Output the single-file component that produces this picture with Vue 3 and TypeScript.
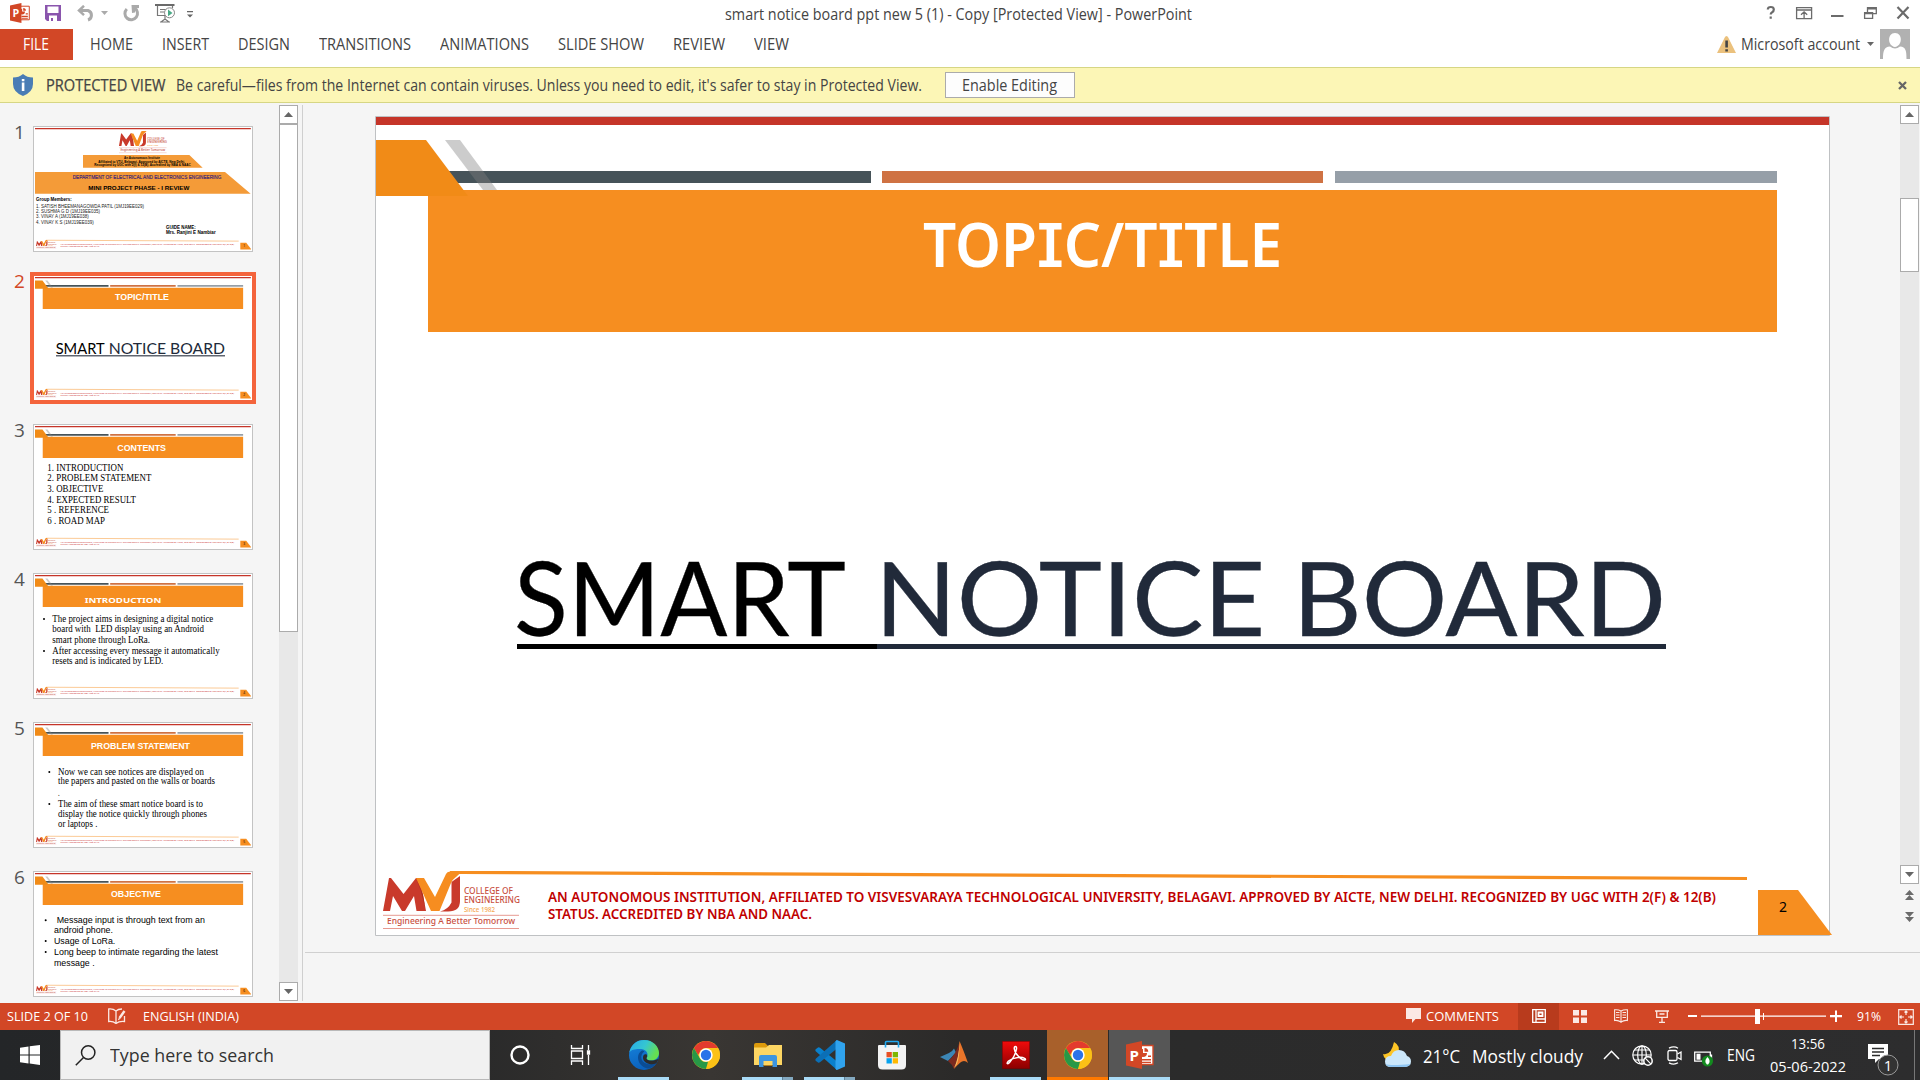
<script setup lang="ts">
interface Line { x: number; y: number; w: number; t: string; bullet?: number }
interface Thumb { id: number; title?: Line; serifTitle?: boolean; sans?: boolean; size: number; lines: Line[] }

// Stretches a single-line label to a fixed width.
const vFit = {
  mounted(el: HTMLElement, binding: { value: number }) {
    const natural = el.getBoundingClientRect().width
    el.style.transform = `scaleX(${binding.value / natural})`
    el.style.marginRight = `${binding.value - natural}px`
  },
}

const tabs = [
  { t: 'HOME', w: 43 }, { t: 'INSERT', w: 47 }, { t: 'DESIGN', w: 52 }, { t: 'TRANSITIONS', w: 92 },
  { t: 'ANIMATIONS', w: 89 }, { t: 'SLIDE SHOW', w: 86 }, { t: 'REVIEW', w: 52 }, { t: 'VIEW', w: 35 },
]

// Splits a heading around its capital I, which is drawn with slab serifs.
const runs = (t: string): string[] => t.split(/(I)/).filter(Boolean)

const footer: Line[] = [
  { x: 172, y: 785, w: 1168, t: 'AN AUTONOMOUS INSTITUTION, AFFILIATED TO VISVESVARAYA TECHNOLOGICAL UNIVERSITY, BELAGAVI. APPROVED BY AICTE, NEW DELHI. RECOGNIZED BY UGC WITH 2(F) & 12(B)' },
  { x: 172, y: 802, w: 264, t: 'STATUS. ACCREDITED BY NBA AND NAAC.' },
]

const thumbs: Thumb[] = [
  { id: 1, size: 14, lines: [] },
  { id: 2, size: 44, title: { x: 240, y: 68, w: 162, t: 'TOPIC/TITLE' }, lines: [] },
  {
    id: 3, size: 28, title: { x: 247, y: 75, w: 146, t: 'CONTENTS' }, lines: [
      { x: 37, y: 134, w: 228, t: '1. INTRODUCTION' }, { x: 37, y: 165, w: 312, t: '2. PROBLEM STATEMENT' },
      { x: 37, y: 198, w: 168, t: '3. OBJECTIVE' }, { x: 37, y: 230, w: 266, t: '4. EXPECTED RESULT' },
      { x: 37, y: 260, w: 185, t: '5 . REFERENCE' }, { x: 37, y: 293, w: 173, t: '6 . ROAD MAP' },
    ],
  },
  {
    id: 4, size: 28, serifTitle: true, title: { x: 149, y: 84, w: 230, t: 'INTRODUCTION' }, lines: [
      { x: 52, y: 140, w: 483, t: 'The project aims in designing a digital notice', bullet: 27 },
      { x: 52, y: 170, w: 455, t: 'board with \u00a0LED display using an Android' },
      { x: 52, y: 203, w: 293, t: 'smart phone through LoRa.' },
      { x: 52, y: 236, w: 502, t: 'After accessing every message it automatically', bullet: 27 },
      { x: 52, y: 266, w: 333, t: 'resets and is indicated by LED.' },
    ],
  },
  {
    id: 5, size: 28, title: { x: 168, y: 75, w: 297, t: 'PROBLEM STATEMENT' }, lines: [
      { x: 69, y: 152, w: 438, t: 'Now we can see notices are displayed on', bullet: 43 },
      { x: 69, y: 181, w: 471, t: 'the papers and pasted on the walls or boards' },
      { x: 69, y: 215, w: 5, t: '.' },
      { x: 69, y: 248, w: 435, t: 'The aim of these smart notice board is to', bullet: 43 },
      { x: 69, y: 278, w: 447, t: 'display the notice quickly through phones' },
      { x: 69, y: 310, w: 118, t: 'or laptops .' },
    ],
  },
  {
    id: 6, size: 27, sans: true, title: { x: 228, y: 72, w: 150, t: 'OBJECTIVE' }, lines: [
      { x: 65, y: 150, w: 445, t: 'Message input is through text from an', bullet: 32 },
      { x: 57, y: 181, w: 177, t: 'android phone.' },
      { x: 57, y: 212, w: 184, t: 'Usage of LoRa.', bullet: 32 },
      { x: 57, y: 245, w: 492, t: 'Long beep to intimate regarding the latest', bullet: 32 },
      { x: 57, y: 278, w: 122, t: 'message .' },
    ],
  },
]

const members: Line[] = [
  { x: 3, y: 240, w: 324, t: '1. SATISH BHEEMANAGOWDA PATIL (1MJ19EE029)' },
  { x: 3, y: 255, w: 192, t: '2. SUSHMA G D (1MJ19EE035)' },
  { x: 3, y: 270, w: 158, t: '3. VINAY A (1MJ19EE038)' },
  { x: 3, y: 287, w: 173, t: '4. VINAY K S (1MJ19EE039)' },
]
</script>

<template>
  <div class="app">
    <svg width="0" height="0" class="defs" aria-hidden="true">
      <defs>
        <g id="logo">
          <path fill="#c93a2b" d="M7 794 13 761h2L27.500 777 40 761H44L50 794h-9.500L38 779 29 794H26L17 779 14 794z" />
          <path fill="#c93a2b" d="M75.500 765 84 759v25q0 10.500-12 10.500h-8q8-2 11.500-9z" />
          <path fill="#f68d20" d="M40 761h8l11 19 11-23q1-2.500 4-2.500h12L80 760q-3 2-5 6L63.500 794H55z" />
          <path fill="#a8301c" d="M40 761 47 778 49 790 44.500 773z" />
          <g fill="#c8503f" font-family="'Noto Sans', sans-serif" font-weight="500" font-size="8">
            <text x="88" y="777" textLength="49" lengthAdjust="spacingAndGlyphs">COLLEGE OF</text>
            <text x="88" y="786" textLength="56" lengthAdjust="spacingAndGlyphs">ENGINEERING</text>
            <text x="88" y="794.500" font-size="6.500" fill="#f5a650" textLength="31" lengthAdjust="spacingAndGlyphs">Since 1982</text>
            <text x="11" y="807" font-size="8.300" textLength="128" lengthAdjust="spacingAndGlyphs">Engineering A Better Tomorrow</text>
          </g>
          <path stroke="#e79a91" stroke-width="1" d="M7 798.300H143M7 811.500H143" />
        </g>
        <g id="master-top">
          <path fill="#c53529" d="M0 0h1453v8H0z" />
        </g>
        <g id="master-title">
          <path fill="#465359" d="M70 54h425v12H70z" />
          <path fill="#cf7243" d="M506 54h441v12H506z" />
          <path fill="#969fa8" d="M959 54h442v12H959z" />
          <path fill="#808080" fill-opacity=".4" d="M69 23h15l37 50h-14z" />
          <path fill="#f68e20" d="M52 73h1349v142H52z" />
          <path fill="#f18b17" d="M0 23h50l42 56H0z" />
        </g>
        <g id="master-foot">
          <path stroke="#f68e20" stroke-width="3.200" d="M74 755.500 86 755.500 1371 761.500" fill="none" />
          <use href="#logo" />
          <path fill="#f68e20" d="M1382 773h40l34 45h-74z" />
        </g>
        <symbol id="chrome" viewBox="0 0 28 28">
          <circle cx="14" cy="14" r="14" fill="#fbc116" />
          <path fill="#e33b2e" d="M1.900 7A14 14 0 0 1 26.100 7H14a7 7 0 0 0-6 3.500L6 14z" />
          <path fill="#279847" d="M1.900 7 8 17.500A7 7 0 0 0 16 20.700L14 28A14 14 0 0 1 1.900 7z" />
          <path fill="#fbc116" d="M26.100 7A14 14 0 0 1 14 28l6-10.500A7 7 0 0 0 18 8.300V7z" />
          <circle cx="14" cy="14" r="6.700" fill="#fff" />
          <circle cx="14" cy="14" r="5.200" fill="#2a73e8" />
        </symbol>
        <symbol id="ppt" viewBox="0 0 28 28">
          <path fill="#fff" stroke="#d24726" stroke-width="1.400" d="M12 4.500h15v19H12z" />
          <path fill="#d24726" d="M17 8a4 4 0 1 0 4 4h-4zM18.500 7v3.800h3.800A3.800 3.800 0 0 0 18.500 7zM16 18h9v1.500h-9zM16 20.700h9v1.300h-9zM22 14.500h3V16h-3z" />
          <path fill="#d24726" d="M0 3.500 16 0v28L0 24.500z" />
          <text x="3.600" y="19.500" font-family="'Open Sans', sans-serif" font-weight="700" font-size="15" fill="#fff">P</text>
        </symbol>
      </defs>
    </svg>

    <header class="titlebar">
      <div class="quick">
        <svg class="q-ppt" width="20" height="20"><use href="#ppt" width="20" height="20" /></svg>
        <svg class="q-save" width="16" height="16" viewBox="0 0 16 16"><path fill="#8a55ad" fill-rule="evenodd" d="M0 0h16v16H2l-2-2zM2.500 1.500v6.500h11V1.500zM4 10.500V16h2v-3h2v3h4v-5.500z" /></svg>
        <svg class="q-undo" width="18" height="17" viewBox="0 0 18 17"><path fill="none" stroke="#aaa" stroke-width="3" d="M2.500 5.500H11a5 5 0 0 1 0 9.500" /><path fill="none" stroke="#aaa" stroke-width="2.500" d="M7 .8 2 5.500 7 10.200" /></svg>
        <svg class="q-arr" width="7" height="4"><path fill="#aaa" d="M0 0h7L3.500 4z" /></svg>
        <svg class="q-redo" width="17" height="17" viewBox="0 0 17 17"><path fill="none" stroke="#aaa" stroke-width="3" d="M3.800 4A6.300 6.300 0 1 0 11.500 3.100" /><path fill="#aaa" d="M8.500 0H16v3l-4 .5v4L9 8z" /></svg>
        <svg class="q-show" width="20" height="19" viewBox="0 0 20 19"><path stroke="#6a6a6a" stroke-width="2" d="M0 1h19.500" /><path fill="none" stroke="#777" stroke-width="1.200" d="M2.500 2v9.500h8M17.500 2v2M5 5.500h6M5 8h4M10 12v4M6 18l4-3 4 3M5 18h10" /><circle cx="14.500" cy="8.800" r="5" fill="#fff" stroke="#888" /><path fill="#4aaa86" d="M13 5.500v6.800l4.500-3.400z" /></svg>
        <svg class="q-more" width="6" height="7"><path fill="#666" d="M0 0h6v1.200H0zM0 3.500h6L3 6.500z" /></svg>
      </div>
      <span v-fit="467" class="lbl">smart notice board ppt new 5 (1) - Copy [Protected View] - PowerPoint</span>
      <div class="winctl">
        <svg width="144" height="16" viewBox="0 0 144 16" fill="none" stroke="#6b6b6b" stroke-width="1.300">
          <path stroke-width="2.200" d="M1.800 4.500q0-2.500 3-2.500t3 2.500q0 1.800-1.600 2.700T4.700 9.500M4.700 11.500v2.300" />
          <path d="M30.600 2.600h15v11h-15zM30.600 5h15M38.100 13V7M35 9.800l3.100-3 3.100 3" />
          <path stroke-width="2" d="M65 11h12.500" />
          <path d="M98.600 7.600h8v5.800h-8zM101.500 7V2.600h8.800v6H107M101.500 3.800h8.800M98.600 8.500h8" />
          <path stroke-width="2.200" d="M131.500 2l11 11.500M142.500 2l-11 11.500" />
        </svg>
      </div>
    </header>

    <nav class="ribbon">
      <div class="file"><span v-fit="26" class="lbl">FILE</span></div>
      <div class="tabs"><span v-for="t in tabs" :key="t.t" v-fit="t.w" class="lbl">{{ t.t }}</span></div>
      <div class="account">
        <svg width="19" height="17" viewBox="0 0 19 17"><path fill="#ebc17d" d="M9.500 0Q11 0 12 3l7 14H0L7 3Q8 0 9.500 0z" /><path fill="#444" d="M8.300 4.500h2.600v7H8.300zM8.300 13.200h2.600v2.300H8.300z" /></svg>
        <span v-fit="119" class="lbl">Microsoft account</span>
        <svg class="acc-arr" width="7" height="4"><path fill="#666" d="M0 0h7L3.500 4z" /></svg>
        <svg width="30" height="30" viewBox="0 0 30 30"><path fill="#b1b1b1" d="M0 0h30v30H0z" /><path fill="#fff" d="M15 4c8 0 7.500 13 0 14-7.500-1-8-14 0-14zM3 30c0-8 1-12 7-12.500q5 4 10 0c6 .5 6.500 4.500 6.500 12.500z" /></svg>
      </div>
    </nav>

    <section class="protected">
      <svg class="shield" width="20" height="22" viewBox="0 0 20 22"><path fill="#4a7db5" d="M10 0q4 3.500 10 3.500V10q0 8-10 12Q0 18 0 10V3.500Q6 3.500 10 0z" /><path fill="#fff" d="M8.800 5h2.600v2.200H8.800zM8.800 8.600h2.600V17H8.800z" /></svg>
      <span v-fit="119.500" class="lbl pv">PROTECTED VIEW</span>
      <span v-fit="746" class="lbl">Be careful—files from the Internet can contain viruses. Unless you need to edit, it's safer to stay in Protected View.</span>
      <div class="enable"><span v-fit="95" class="lbl">Enable Editing</span></div>
      <svg class="pv-x" width="9" height="9"><path stroke="#666" stroke-width="2.300" d="M1 1l7 7M8 1L1 8" /></svg>
    </section>

    <main class="work">
      <aside class="pane">
        <div v-for="s in thumbs" :key="s.id" class="item" :class="{ sel: s.id === 2 }">
          <span class="num">{{ s.id }}</span>
          <div class="frame">
            <svg class="thumb" viewBox="0 0 648 366" preserveAspectRatio="none">
              <g transform="scale(.44567)">
                <use href="#master-top" />
                <use v-if="s.id > 1" href="#master-title" />
                <use href="#master-foot" />
                <g class="foot-text small">
                  <text v-for="f in footer" :key="f.y" :x="f.x" :y="f.y" :textLength="f.w" lengthAdjust="spacingAndGlyphs">{{ f.t }}</text>
                </g>
              </g>
              <text x="625" y="357" font-size="10">{{ s.id }}</text>
              <text v-if="s.title" class="t-title" :class="{ wide: s.serifTitle }" :x="s.title.x" :y="s.title.y" :textLength="s.title.w" lengthAdjust="spacingAndGlyphs">{{ s.title.t }}</text>
              <g :class="s.sans ? 't-sans' : 't-serif'" :font-size="s.size">
                <template v-for="l in s.lines" :key="l.y">
                  <circle v-if="l.bullet" :cx="l.bullet" :cy="l.y - 8" r="3" />
                  <text :x="l.x" :y="l.y" :textLength="l.w" lengthAdjust="spacingAndGlyphs">{{ l.t }}</text>
                </template>
              </g>
              <g v-if="s.id === 1" class="t-sans">
                <use href="#logo" transform="translate(244.600 -859) scale(1.050 1.150)" />
                <path fill="#f49b38" d="M144 81h319l40 38H144zM0 132h570l77 65H0z" />
                <g font-size="10" font-weight="700">
                  <text x="267" y="93" textLength="108" lengthAdjust="spacingAndGlyphs">An Autonomous Institute</text>
                  <text x="190" y="105" textLength="260" lengthAdjust="spacingAndGlyphs">Affiliated to VTU, Belagavi. Approved by AICTE, New Delhi.</text>
                  <text x="178" y="114" textLength="289" lengthAdjust="spacingAndGlyphs">Recognized by UGC with 2(f) &amp; 12(B). Accredited by NBA &amp; NAAC</text>
                </g>
                <g font-weight="700" font-size="17">
                  <text x="113" y="153" font-weight="400" fill="#35207a" stroke="#35207a" stroke-width=".5" textLength="446" lengthAdjust="spacingAndGlyphs">DEPARTMENT OF ELECTRICAL AND ELECTRONICS ENGINEERING</text>
                  <text x="160" y="186" textLength="303" lengthAdjust="spacingAndGlyphs">MINI PROJECT PHASE - I REVIEW</text>
                  <text x="3" y="218" font-size="15" textLength="107" lengthAdjust="spacingAndGlyphs">Group Members:</text>
                  <text x="393" y="303" font-size="15" textLength="89" lengthAdjust="spacingAndGlyphs">GUIDE NAME:</text>
                  <text x="393" y="317" font-size="15" textLength="149" lengthAdjust="spacingAndGlyphs">Mrs. Ranjini E Nambiar</text>
                </g>
                <text v-for="m in members" :key="m.y" :x="m.x" :y="m.y" font-size="15" fill="#222" :textLength="m.w" lengthAdjust="spacingAndGlyphs">{{ m.t }}</text>
              </g>
              <g v-if="s.id === 2" class="gill" font-size="44">
                <text x="62" y="231" textLength="147" lengthAdjust="spacingAndGlyphs">SMART</text>
                <text x="221" y="231" fill="#212a3a" textLength="349" lengthAdjust="spacingAndGlyphs">NOTICE BOARD</text>
                <path stroke="#111a2a" stroke-width="3" d="M63 236.500H570" />
              </g>
            </svg>
          </div>
        </div>
      </aside>
      <div class="scroll left">
        <div class="btn"><svg width="9" height="5"><path fill="#666" d="M0 5h9L4.500 0z" /></svg></div>
        <div class="bar b1"></div>
        <div class="track"></div>
        <div class="btn"><svg width="9" height="5"><path fill="#666" d="M0 0h9L4.500 5z" /></svg></div>
      </div>
      <div class="splitter"></div>
      <div class="editor">
        <div class="stage">
          <svg class="slide" width="1457" height="820" viewBox="-1 -1 1457 820">
            <path fill="#fff" stroke="#bfc1c3" d="M-.5-.5h1454v819H-.5z" />
            <use href="#master-top" /><use href="#master-title" /><use href="#master-foot" />
            <g class="foot-text">
              <text v-for="f in footer" :key="f.y" :x="f.x" :y="f.y" :textLength="f.w" lengthAdjust="spacingAndGlyphs">{{ f.t }}</text>
            </g>
            <text x="547" y="149.500" class="big-title" textLength="359" lengthAdjust="spacingAndGlyphs"><tspan v-for="(r, i) in runs('TOPIC/TITLE')" :key="i" :class="{ slab: r === 'I' }">{{ r }}</tspan></text>
            <g class="gill big" font-size="102">
              <text x="138" y="519" textLength="332" lengthAdjust="spacingAndGlyphs">SMART</text>
              <text x="499" y="519" fill="#212a3a" stroke="#212a3a" textLength="791" lengthAdjust="spacingAndGlyphs">NOTICE BOARD</text>
            </g>
            <path fill="#000" d="M141 527h360v5H141z" /><path fill="#212a3a" d="M501 527h789v5H501z" />
            <text x="1403" y="795" font-family="'Noto Sans', sans-serif" font-size="14">2</text>
          </svg>
          <div class="scroll right">
            <div class="btn"><svg width="9" height="5"><path fill="#666" d="M0 5h9L4.500 0z" /></svg></div>
            <div class="track t1"></div>
            <div class="bar b2"></div>
            <div class="track"></div>
            <div class="btn"><svg width="9" height="5"><path fill="#666" d="M0 0h9L4.500 5z" /></svg></div>
            <svg class="jump" width="19" height="46" viewBox="0 0 19 46"><path fill="#6b6b6b" d="M5 11h9L9.500 6zM5 16h9l-4.500-5zM5 28h9l-4.500 5zM5 33h9l-4.500 5z" /></svg>
          </div>
        </div>
        <div class="notes"></div>
      </div>
    </main>

    <footer class="status">
      <span v-fit="81" class="lbl s1">SLIDE 2 OF 10</span>
      <svg class="s-book" width="18" height="16" viewBox="0 0 18 16" fill="none" stroke="#fbe9e4" stroke-width="1.300"><path d="M8 3Q5 .5.700 1v12.500Q5 13 8 15.500zM8 3Q10 1 14 1M8 15.500q3-2.500 8.500-2V8" /><path stroke-width="2.400" d="M16.500 3l-5 7" /><path d="M11.500 10l-1 2" /></svg>
      <span v-fit="96" class="lbl">ENGLISH (INDIA)</span>
      <div class="s-right">
        <svg width="15" height="15"><path fill="#fbe9e4" d="M0 0h15v11H9.500L6 15v-4H0z" /></svg>
        <span v-fit="73" class="lbl">COMMENTS</span>
        <div class="view on"><svg width="14" height="14" viewBox="0 0 14 14" fill="none" stroke="#fff" stroke-width="1.300"><path d="M.7.7h12.600v12.600H.7zM4 1v12M4 10h9" /><path d="M6.500 3.500h4v3.500h-4z" stroke-width="1.800" /></svg></div>
        <div class="view"><svg width="14" height="13"><path fill="#fbe9e4" d="M0 0h6v5.500H0zM8 0h6v5.500H8zM0 7.500h6V13H0zM8 7.500h6V13H8z" /></svg></div>
        <div class="view"><svg width="14" height="14" viewBox="0 0 14 14" fill="none" stroke="#fbe9e4" stroke-width="1.100"><path d="M7 2Q4 .3.600.8v10.700Q4 11 7 13zM7 2Q10 .3 13.400.8v10.700Q10 11 7 13zM2 3.500h3.500M2 6h3.500M2 8.500h3.500M8.500 3.500H12M8.500 6H12M8.500 8.500H12" /></svg></div>
        <div class="view"><svg width="14" height="13" viewBox="0 0 14 13" fill="none" stroke="#fbe9e4" stroke-width="1.300"><path d="M0 1h14M1.700 1v6.300h10.600V1M4.500 4h5M7 7.500V12M4 12.300h6" /></svg></div>
        <svg class="zoomer" width="156" height="18" viewBox="0 0 156 18"><path fill="#fff" d="M1 8h9v2H1zM14 8.500h125v1.200H14zM143 8h12v2.200h-12zM148 3.500h2V15h-2zM76 6h1v7h-1z" /><path fill="#fff" d="M68 2h5v15h-5z" /></svg>
        <span v-fit="24" class="lbl pct">91%</span>
        <svg width="16" height="16" viewBox="0 0 16 16" fill="none" stroke="#fbe9e4" stroke-width="1.200"><path d="M.7.7h14.600v14.600H.7zM8 2v4M8 10v4M2 8h4M10 8h4M6.500 3.500 8 2l1.500 1.500M6.500 12.500 8 14l1.500-1.500M3.500 6.500 2 8l1.500 1.500M12.500 6.500 14 8l-1.500 1.500" /></svg>
      </div>
    </footer>

    <div class="taskbar">
      <div class="start"><svg width="20" height="20"><path fill="#fff" d="M0 2.700 8.500 1.500V9.500H0zM9.700 1.300 20 0v9.500H9.700zM0 10.500h8.500v8L0 17.300zM9.700 10.500H20V20L9.700 18.600z" /></svg></div>
      <div class="search">
        <svg width="21" height="21" viewBox="0 0 21 21" fill="none" stroke="#222" stroke-width="1.500"><circle cx="13.200" cy="7.500" r="6.700" /><path d="M8.500 12.500.8 20.200" /></svg>
        <span v-fit="164" class="lbl">Type here to search</span>
      </div>
      <div class="slot co"><svg width="20" height="20"><circle cx="10" cy="10" r="8.500" fill="none" stroke="#fff" stroke-width="2.400" /></svg></div>
      <div class="slot tv"><svg width="21" height="20" viewBox="0 0 21 20" fill="none" stroke="#fff" stroke-width="1.300"><path d="M1.500 0v3.500h11V0M1.500 6h11v7.500h-11zM1.500 20v-4h11v4M18.500 0v5M18.500 10v10" /><path fill="#fff" d="M17.500 6h2v3h-2z" /></svg></div>
      <div class="slot run">
        <svg width="30" height="30" viewBox="0 0 30 30">
          <defs>
            <linearGradient id="eg" x1="0" x2="1" y2=".4"><stop stop-color="#27a9e8" /><stop offset=".55" stop-color="#35c6d2" /><stop offset="1" stop-color="#66df50" /></linearGradient>
            <linearGradient id="eb" x1="0" y1="0" x2=".3" y2="1"><stop stop-color="#1785de" /><stop offset="1" stop-color="#0b62bd" /></linearGradient>
          </defs>
          <circle cx="15" cy="15" r="15" fill="url(#eb)" />
          <path fill="url(#eg)" d="M.300 12.500C2 4.500 8 0 15 0c9 0 15 6.500 15 13 0 5-4 7.500-8 7.500-3 0-5-1-4.500-2.500 2.500-3.500.5-8.500-5-9C7.500 8.500 2 9.500.3 12.500z" />
          <path fill="#0b4c93" d="M13 10.500c-4 2.500-5 7-3 11.500 2 4 6 6.500 10 6.500 3-1 5.500-2.500 7.500-5.500-5 2-13 2-15-4-.7-3 .3-6 2.800-7.500-.5-.7-1.400-1-2.300-1z" />
          <path fill="#2b2b2b" d="M17.500 18c-.5 3 8 3.500 12 .8-.5 2-1.500 4-2.500 4.700-5 2-13 0-13-6 0-3 2-4 3.700-3q1.300 1.800-.2 3.500z" />
        </svg>
      </div>
      <div class="slot"><svg width="28" height="28"><use href="#chrome" width="28" height="28" /></svg></div>
      <div class="slot run multi">
        <svg width="28" height="24" viewBox="0 0 28 24"><path fill="#dd9a0b" d="M0 2q0-2 2-2h9l3 3v6H0z" /><path fill="#fdd663" d="M0 4.500h12L15 2h13v20H0z" /><path fill="#3d95df" d="M5 24V14q0-2 2-2h14q2 0 2 2v10h-4.500v-6h-9v6z" /><path fill="#b3801e" d="M9.500 22h9v1h-9z" /></svg>
      </div>
      <div class="slot run multi">
        <svg width="30" height="30" viewBox="0 0 30 30"><path fill="#0a80cc" d="M1 9 3 7.500Q4 7 5 7.800L22 21.500V30L1 11.500Q-.3 10 1 9z" /><path fill="#0b6fb6" d="M1 21l2 1.500q1 .5 2-.3L22 8.500V0L1 18.500Q-.3 20 1 21z" /><path fill="#30a3ee" d="M22 0l8 3.500v23L22 30q-1 0-1.500-1.500V1.500Q21 0 22 0z" /></svg>
      </div>
      <div class="slot">
        <svg width="30" height="30" viewBox="0 0 30 30"><path fill="#f3f3f3" d="M1 6q0-1 1-1h26q1 0 1 1v19q0 4.500-4.500 4.500h-19Q1 29.500 1 25z" /><path fill="none" stroke="#20a7ef" stroke-width="1.600" d="M8.500 7.500V2.500q0-1 1-1h11q1 0 1 1v5" /><path fill="#e74f23" d="M9.500 12h5.300v5.300H9.500z" /><path fill="#7db701" d="M15.700 12H21v5.300h-5.300z" /><path fill="#07a2ee" d="M9.500 18.200h5.300v5.300H9.500z" /><path fill="#feb801" d="M15.700 18.200H21v5.300h-5.300z" /></svg>
      </div>
      <div class="slot">
        <svg width="28" height="28" viewBox="0 0 28 28"><path fill="#3c86b5" d="M0 16 9 12q3-1 5-4.500l2 4L8 20z" /><path fill="#7b2a1f" d="M8 20Q16 14 19.500 1L21 15l-7 13q-2-5-6-8z" /><path fill="#e9752a" d="M19.500 0Q23 8 28 22q-3-3-6-1.500T14 28q5-10 5.500-28z" /><path fill="#f8c063" d="M19.500 1Q19 17 14 27l3-4Q20 14 19.500 1z" /></svg>
      </div>
      <div class="slot run">
        <svg width="28" height="28" viewBox="0 0 28 28"><defs><linearGradient id="ac" y2="1" x2="0"><stop stop-color="#f10b0b" /><stop offset="1" stop-color="#8b0000" /></linearGradient></defs><path fill="url(#ac)" stroke="#700" stroke-width=".6" d="M.3.3h27.400v27.400H.3z" /><path fill="none" stroke="#fff" stroke-width="1.500" d="M13.500 5.500c-2 0-1.500 4 1 7.500 2 3 6 6.500 8.500 6 1.500-1-1-2.700-5-2.700-4.500 0-9 1.700-11.500 3.700-2.500 2.500-1 3.800 1 1.500 3.500-4 6.500-10.500 7-13.500.2-1.700-.3-2.500-1-2.500z" /></svg>
      </div>
      <div class="slot alert"><svg width="28" height="28"><use href="#chrome" width="28" height="28" /></svg></div>
      <div class="slot active"><svg width="28" height="28"><use href="#ppt" width="28" height="28" /></svg></div>
      <div class="tray">
        <svg width="28" height="26" viewBox="0 0 28 26"><path fill="#fdc526" d="M11 0q7 4 4 11L8 19Q1 18 0 12q8 2 11-12z" /><path fill="#cbe7fb" d="M8 25q-6 0-6-5.500T8 14q2-6 8-6t8 6q4 1 4 5.500T22.500 25z" /><path fill="#8fc5f2" d="M8 25q-4 0-5.500-3 5 2 25 0-2 3-5 3z" /></svg>
        <span v-fit="37" class="lbl w1">21°C</span>
        <span v-fit="111" class="lbl w2">Mostly cloudy</span>
        <svg class="up" width="17" height="10"><path fill="none" stroke="#fff" stroke-width="1.500" d="M1 9l7.500-7.700L16 9" /></svg>
        <svg class="globe" width="21" height="21" viewBox="0 0 21 21" fill="none" stroke="#fff" stroke-width="1.200"><circle cx="10" cy="10" r="9.200" /><ellipse cx="10" cy="10" rx="4.300" ry="9.200" /><path d="M1 10h18M2.500 5h15M2.500 15H12M10 1v18" /><circle cx="16" cy="16" r="4.200" fill="#2b2b2b" stroke-width="1.500" /><path d="M13.200 13.200l5.600 5.600" /></svg>
        <svg class="cam" width="15" height="19" viewBox="0 0 15 19" fill="none" stroke="#fff" stroke-width="1.300"><rect x="1" y="4.500" width="9" height="10" rx="1.500" /><path d="M10.500 8l3.500-2v7.500l-3.500-2M2 2.200q5-2.500 9 0M2 16.800q5 2.500 9 0" /></svg>
        <svg class="bat" width="20" height="17" viewBox="0 0 20 17"><path fill="none" stroke="#fff" stroke-width="1.300" d="M.7 2.200h15.600v9H.7zM17.500 4.500v4" /><path fill="#fff" d="M2.500 3.700h4v6h-4z" /><circle cx="13.500" cy="11" r="5.600" fill="#13891f" /><path fill="#fff" d="M13.500 7q4 4 .6 7.500h-1.200Q9.500 11 13.500 7z" /></svg>
        <span v-fit="28" class="lbl eng">ENG</span>
        <div class="clock"><span v-fit="34" class="lbl">13:56</span><span v-fit="76" class="lbl">05-06-2022</span></div>
        <svg class="notif" width="32" height="32" viewBox="0 0 32 32"><path fill="#fff" d="M0 0h20v15H11l-4 4v-4H0z" /><path stroke="#2b2b2b" stroke-width="1.400" d="M4 4.500h12M4 8h12M4 11.500h8" /><circle cx="20" cy="21" r="10" fill="#333" stroke="#999" /><text x="20" y="26.500" text-anchor="middle" font-family="'Open Sans', sans-serif" font-size="15" fill="#fff">1</text></svg>
        <div class="peek"></div>
      </div>
    </div>
  </div>
</template>

<style>
body { margin: 0; overflow: hidden; }
</style>

<style scoped>
.app { width: 1920px; height: 1080px; display: flex; flex-direction: column; background: #fff; color: #444; font: 16px/20px 'Open Sans', 'Noto Sans', sans-serif; overflow: hidden; }
.app * { box-sizing: border-box; }
svg { display: block; flex: none; }
.defs { position: absolute; }
.lbl { display: inline-block; white-space: nowrap; transform-origin: left center; flex: none; }

.titlebar { height: 29px; display: flex; align-items: flex-start; }
.titlebar > .lbl { font-size: 15.500px; margin-top: 4px; }
.quick { width: 725px; display: flex; align-items: flex-start; padding-left: 10px; }
.q-ppt { margin-top: 3px; }
.q-save { margin: 5px 0 0 15px; }
.q-undo { margin: 5px 0 0 16px; }
.q-arr { margin: 11px 0 0 6px; }
.q-redo { margin: 5px 0 0 15px; }
.q-show { margin: 4px 0 0 15px; }
.q-more { margin: 11px 0 0 12px; }
.winctl { margin: 5px 10px 0 auto; }

.ribbon { height: 38px; display: flex; align-items: flex-start; }
.file { width: 73px; height: 31px; background: #d24726; color: #fff; padding: 5px 0 0 23px; }
.ribbon .lbl { font-size: 15.500px; }
.tabs { display: flex; gap: 29.100px; padding: 5px 0 0 16.800px; }
.account { margin-left: auto; margin-right: 10px; display: flex; align-items: center; height: 30px; gap: 5px; }
.acc-arr { margin: 0 1px 0 2px; }

.protected { height: 36px; background: #fcf6b6; border-top: 1px solid #d6d684; border-bottom: 1px solid #d6d684; display: flex; align-items: center; padding: 0 13px; }
.protected .lbl { font-size: 15.500px; }
.shield { margin-right: 13px; }
.pv { margin-left: 0; -webkit-text-stroke: .25px #444; }
.pv + .lbl { margin-left: 10px; }
.enable { margin-left: 23px; width: 130px; height: 26px; background: #fdfdfd; border: 1px solid #ababab; padding: 2px 0 0 16px; }
.pv-x { margin-left: auto; }

.work { height: 900px; display: flex; background: #f5f5f5; }
.pane { width: 279px; padding-top: 23px; overflow: hidden; }
.item { display: flex; align-items: flex-start; height: 149px; padding-left: 14px; }
.num { width: 19px; font-size: 19px; line-height: 22px; margin-top: -5px; color: #555; flex: none; }
.frame { width: 220px; height: 126px; border: 1px solid #c3c3c3; background: #fff; padding: 1px; flex: none; }
.sel .num { color: #d24726; }
.sel .frame { box-shadow: 0 0 0 3px #f4643c; border-color: #f4643c; }
.thumb { width: 216px; height: 122px; }
.t-title { font: 700 26px 'Liberation Sans', Arial, sans-serif; fill: #fff; }
.t-title.wide { font: 700 23px 'Noto Sans', sans-serif; }
.t-serif { font-family: 'Liberation Serif', serif; }
.t-sans { font-family: 'Liberation Sans', sans-serif; }
.gill { font-family: Lato, sans-serif; }
.gill.big { stroke: #000; stroke-width: .3px; }
.foot-text { font: 600 14.300px 'Noto Sans', sans-serif; fill: #c00000; }
.foot-text.small { fill-opacity: .75; }
.big-title { font: 600 61px 'Noto Sans', sans-serif; fill: #fff; }
.slab { font-family: Inter, 'Noto Sans', sans-serif; font-size: 60px; font-feature-settings: 'cv08' 1; }

.scroll { width: 19px; margin-top: 2px; display: flex; flex-direction: column; }
.scroll.left { height: 896px; }
.btn { height: 19px; flex: none; background: #fff; border: 1px solid #ababab; display: flex; align-items: center; justify-content: center; }
.bar { flex: none; background: #fff; border: 1px solid #ababab; }
.b1 { height: 508px; }
.b2 { height: 74px; }
.track { flex: 1; background: #e8e8e8; }
.t1 { flex: none; height: 74px; }
.splitter { width: 1px; height: 896px; margin: 2px 2px 0 4px; background: #cfcfcf; }
.editor { flex: 1; display: flex; flex-direction: column; }
.stage { height: 849px; display: flex; justify-content: space-between; }
.slide { margin: 13px 0 0 70px; }
.scroll.right { height: 825px; margin-right: 1px; }
.jump { flex: none; }
.notes { flex: 1; border-top: 1px solid #d0d0d0; }

.status { height: 27px; background: #d24726; color: #fff; display: flex; align-items: center; padding-left: 7px; font-size: 13.500px; }
.status .lbl { margin-top: -1px; }
.s-book { margin: -1px 17px 0 20px; }
.s-right { margin-left: auto; display: flex; align-items: center; height: 27px; padding-right: 6px; }
.s-right > svg:first-child { margin-top: -2px; }
.s-right > .lbl:nth-of-type(1) { margin-left: 5px; }
.view { width: 41px; height: 27px; display: flex; align-items: center; justify-content: center; padding-bottom: 1px; }
.view.on { background: #b83b1d; margin-left: 19px; }
.zoomer { margin: -1px 14px 0 5px; }
.pct + svg { margin-left: 17px; }

.taskbar { height: 50px; display: flex; background: linear-gradient(90deg, #242628 0, #2a2a2a 25%, #393633 37%, #2b2a29 50%, #2b2b2b 62%, #2d2d2e 100%); color: #fff; }
.start { width: 60px; display: flex; align-items: center; justify-content: center; }
.search { width: 430px; background: #f1f1f1; border: 1px solid #b9b9b9; color: #333; display: flex; align-items: center; padding-left: 14px; gap: 14px; font-size: 18.500px; }
.slot { width: 61px; margin-right: 1px; display: flex; align-items: center; justify-content: center; position: relative; flex: none; }
.slot.co { width: 60px; }
.slot.tv { margin-right: 3px; width: 59px; }
.run::after { content: ''; position: absolute; left: 5px; right: 5px; bottom: 0; height: 3px; background: #a9dbf7; }
.multi::after { background: linear-gradient(90deg, #a9dbf7 40px, #5e8197 40px, #5e8197 41px, #83a9c0 41px); }
.alert { background: #a8602b; }
.alert::after { content: ''; position: absolute; left: 0; right: 0; bottom: 0; height: 3px; background: #ff7900; }
.active { background: #565656; }
.active::after { content: ''; position: absolute; left: 0; right: 0; bottom: 0; height: 3px; background: #a9dbf7; }
.tray { margin-left: auto; display: flex; align-items: center; font-size: 17.500px; }
.w1 { margin-left: 12px; }
.w2 { margin-left: 12px; }
.tray > .lbl { position: relative; top: 1px; }
.up { margin-left: 20px; }
.globe { margin-left: 12px; }
.cam { margin-left: 14px; }
.bat { margin: 6px 0 0 12px; }
.tray > .eng { margin-left: 13px; font-size: 15.500px; top: 0; }
.clock { width: 76px; margin-left: 15px; display: flex; flex-direction: column; align-items: center; font-size: 15px; line-height: 23px; }
.notif { margin: 14px 14px 0 22px; align-self: flex-start; }
.peek { width: 6px; height: 50px; border-left: 1px solid #777; }
</style>
